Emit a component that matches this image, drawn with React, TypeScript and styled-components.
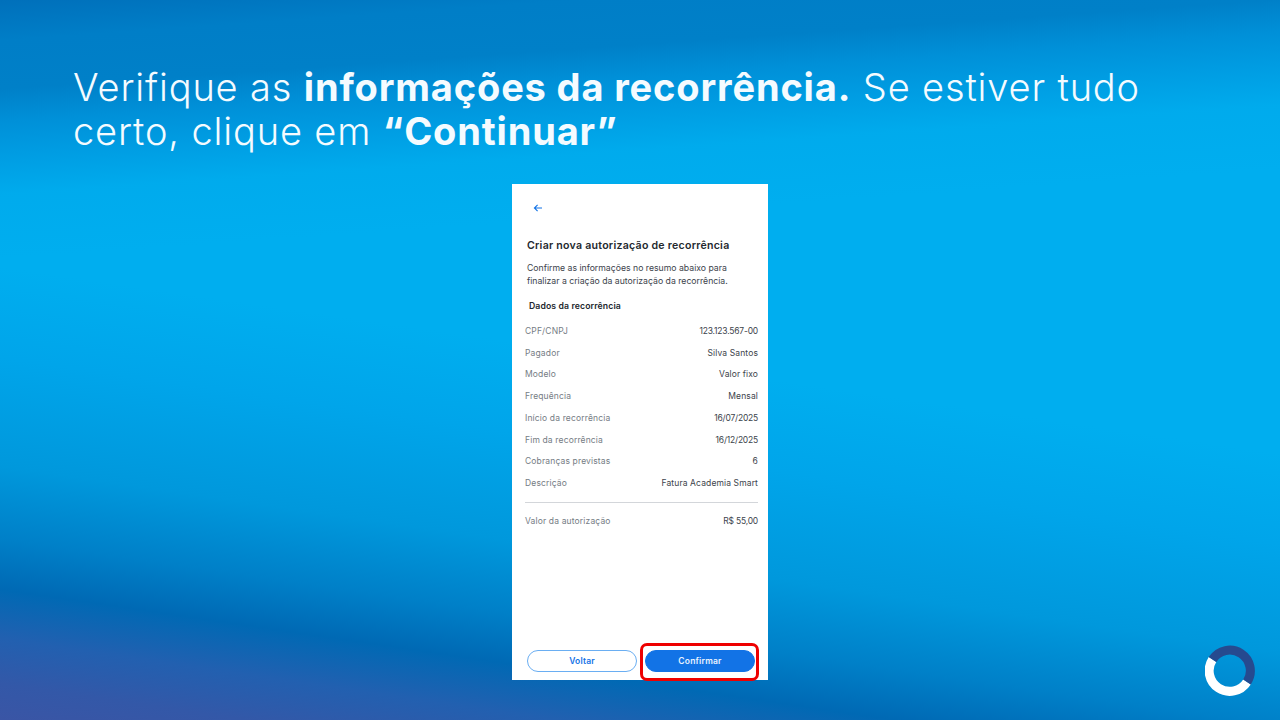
import React from 'react';
import styled, { createGlobalStyle } from 'styled-components';

const GlobalStyle = createGlobalStyle`
  html, body {
    margin: 0;
    padding: 0;
    width: 1280px;
    height: 720px;
    overflow: hidden;
    font-family: 'Inter', 'Liberation Sans', sans-serif;
  }
`;

const Slide = styled.main`
  position: relative;
  width: 1280px;
  height: 720px;
  overflow: hidden;
  display: flex;
  flex-direction: column;
  background:
    linear-gradient(176deg, rgba(0, 112, 187, 1) 0%, rgba(0, 126, 199, 1) 5%, rgba(0, 128, 200, 1) 11%, rgba(0, 144, 216, 1) 15%, rgba(0, 156, 226, 1) 19%, rgba(0, 170, 236, 0.8) 24%, rgba(0, 174, 239, 0) 32%),
    linear-gradient(188.3deg, #00aeef 0%, #00aeef 50%, #00a5ea 60%, #0098dc 72%, #0080c8 80%, #0069b4 85.6%, #2260b0 91%, #3358a8 96%, #3a55a5 100%);
`;

const Heading = styled.h1`
  margin: 0;
  padding: 65px 100px 0 73px;
  height: 184px;
  box-sizing: border-box;
  font-size: 38px;
  line-height: 44px;
  font-weight: 300;
  letter-spacing: 0.85px;
  color: #f4fbff;

  strong {
    font-weight: 700;
  }
`;

const Phone = styled.section`
  position: relative;
  width: 256px;
  height: 496px;
  margin: 0 auto;
  box-sizing: border-box;
  padding: 0 10px 0 13px;
  background: #fff;
  display: flex;
  flex-direction: column;
  font-family: 'Inter', 'Liberation Sans', sans-serif;
`;

const BackButton = styled.div`
  height: 48px;
  display: flex;
  align-items: center;
  padding: 0 0 0 8px;
`;

const Title = styled.h2`
  margin: 7px 0 0 2px;
  font-size: 10.6px;
  line-height: 14px;
  font-weight: 600;
  letter-spacing: 0.25px;
  color: #23282e;
`;

const Intro = styled.p`
  margin: 8.5px 0 0 2px;
  font-size: 8.7px;
  line-height: 13px;
  color: #3c434b;
`;

const SectionTitle = styled.h3`
  margin: 12.3px 0 0 4px;
  font-size: 8.7px;
  line-height: 12px;
  font-weight: 600;
  letter-spacing: 0.1px;
  color: #23282e;
`;

const Rows = styled.dl`
  margin: 8.3px 0 0;
  display: flex;
  flex-direction: column;
`;

const Row = styled.div`
  height: 21.75px;
  display: flex;
  align-items: center;
  justify-content: space-between;
`;

const Label = styled.dt`
  font-size: 8.5px;
  letter-spacing: 0.15px;
  color: #757c84;
`;

const Value = styled.dd<{ $numeric?: boolean }>`
  margin: 0;
  font-size: 8.5px;
  letter-spacing: ${({ $numeric }) => ($numeric ? '-0.2px' : '0.12px')};
  color: #3c434b;
`;

const Divider = styled.hr`
  width: 100%;
  height: 1px;
  margin: 8px 0 7px;
  border: 0;
  background: #d3d6da;
`;

const Footer = styled.div`
  margin-top: auto;
  padding: 0 3px 8px 2px;
  display: flex;
  gap: 8px;
`;

const ActionButton = styled.button<{ $primary?: boolean }>`
  flex: 1;
  height: 22px;
  border-radius: 11px;
  box-sizing: border-box;
  border: 1px solid ${({ $primary }) => ($primary ? '#1273e6' : '#6aaef2')};
  background: ${({ $primary }) => ($primary ? '#1273e6' : '#fff')};
  color: ${({ $primary }) => ($primary ? '#e8f2ff' : '#1273e6')};
  font-family: inherit;
  font-size: 8.5px;
  font-weight: 600;
  letter-spacing: 0.2px;
  padding: 0;
`;

const Highlight = styled.div`
  position: absolute;
  left: 128px;
  top: 459px;
  width: 119px;
  height: 38px;
  box-sizing: border-box;
  border: 3px solid #ee0000;
  border-radius: 7px;
`;

const Logo = styled.svg`
  position: absolute;
  right: 25px;
  bottom: 24px;
  width: 50px;
  height: 51px;
`;

const rows: [string, string, boolean?][] = [
  ['CPF/CNPJ', '123.123.567-00', true],
  ['Pagador', 'Silva Santos'],
  ['Modelo', 'Valor fixo'],
  ['Frequência', 'Mensal'],
  ['Início da recorrência', '16/07/2025', true],
  ['Fim da recorrência', '16/12/2025', true],
  ['Cobranças previstas', '6'],
  ['Descrição', 'Fatura Academia Smart'],
];

function App(): JSX.Element {
  return (
    <Slide>
      <GlobalStyle />
      <Heading>
        Verifique as <strong>informações da recorrência.</strong> Se estiver tudo certo, clique em{' '}
        <strong>“Continuar”</strong>
      </Heading>
      <Phone>
        <BackButton>
          <svg width="10" height="10" viewBox="0 0 10 10" fill="none" stroke="#1273e6" strokeWidth="1.1">
            <path d="M9 5H1.5M4.6 1.8L1.4 5l3.2 3.2" />
          </svg>
        </BackButton>
        <Title>Criar nova autorização de recorrência</Title>
        <Intro>
          Confirme as informações no resumo abaixo para
          <br />
          finalizar a criação da autorização da recorrência.
        </Intro>
        <SectionTitle>Dados da recorrência</SectionTitle>
        <Rows>
          {rows.map(([label, value, numeric]) => (
            <Row key={label}>
              <Label>{label}</Label>
              <Value $numeric={numeric}>{value}</Value>
            </Row>
          ))}
          <Divider />
          <Row>
            <Label>Valor da autorização</Label>
            <Value $numeric>R$ 55,00</Value>
          </Row>
        </Rows>
        <Footer>
          <ActionButton>Voltar</ActionButton>
          <ActionButton $primary>Confirmar</ActionButton>
        </Footer>
        <Highlight />
      </Phone>
      <Logo viewBox="0 0 50 51" fill="none" strokeWidth="9">
        <path d="M7.5 14.5A20.5 20.5 0 0 0 42 37" stroke="#ffffff" />
        <path d="M7.5 14.5A20.5 20.5 0 1 1 42 37" stroke="#264a8f" />
      </Logo>
    </Slide>
  );
}

export default App;
